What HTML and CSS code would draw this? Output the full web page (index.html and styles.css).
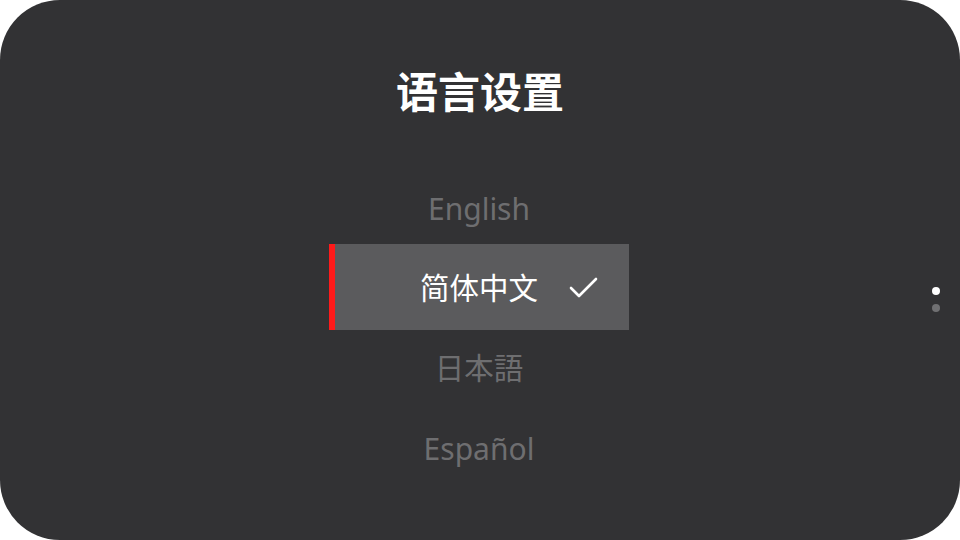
FILE: index.html
```html
<!DOCTYPE html>
<html lang="zh">
<head>
<meta charset="utf-8">
<link rel="stylesheet" href="styles.css">
</head>
<body>
<div class="screen">
  <h1 class="title">语言设置</h1>
  <div class="list">
    <div class="row">English</div>
    <div class="row selected">
      <span class="label">简体中文</span>
      <svg class="check" width="30" height="22" viewBox="0 0 30 22"><polyline points="2,11 10,19 27,2" fill="none" stroke="#ffffff" stroke-width="2.6" stroke-linecap="round" stroke-linejoin="round"/></svg>
    </div>
    <div class="row"><span class="label" lang="ja">日本語</span></div>
    <div class="row">Español</div>
  </div>
  <div class="dots">
    <span class="dot active"></span>
    <span class="dot"></span>
  </div>
</div>
</body>
</html>
```
FILE: styles.css
```css
html, body {
  margin: 0;
  padding: 0;
  background: #ffffff;
}
.screen {
  position: relative;
  width: 960px;
  height: 540px;
  background: #323234;
  border-radius: 60px;
  overflow: hidden;
  display: flex;
  flex-direction: column;
  align-items: center;
  font-family: "Noto Sans", "Noto Sans CJK SC", sans-serif;
}
.title {
  margin: 62px 0 0 0;
  height: 56px;
  line-height: 56px;
  font-size: 42px;
  font-weight: 700;
  color: #ffffff;
  font-family: "Noto Sans CJK SC", sans-serif;
}
.list {
  margin-top: 50px;
  margin-right: 2px;
  display: flex;
  flex-direction: column;
  width: 300px;
}
.row {
  position: relative;
  height: 80px;
  display: flex;
  align-items: center;
  justify-content: center;
  font-size: 30px;
  color: #6e6e70;
}
.row.selected {
  height: 86px;
  margin: -4px 0 -2px 0;
  background: #5b5b5d;
  color: #ffffff;
  box-shadow: inset 6px 0 0 #ff1a1a;
}
.label {
  font-family: "Noto Sans CJK SC", sans-serif;
  font-size: 29.5px;
  margin-top: -2px;
}
.label[lang="ja"] {
  font-family: "Noto Sans CJK JP", sans-serif;
  margin-top: -4px;
}
.check {
  position: absolute;
  left: 240px;
  top: 33px;
}
.dots {
  position: absolute;
  right: 20px;
  top: 287px;
  display: flex;
  flex-direction: column;
  gap: 9px;
}
.dot {
  width: 8px;
  height: 8px;
  border-radius: 50%;
  background: #707072;
}
.dot.active {
  background: #ffffff;
}
```
